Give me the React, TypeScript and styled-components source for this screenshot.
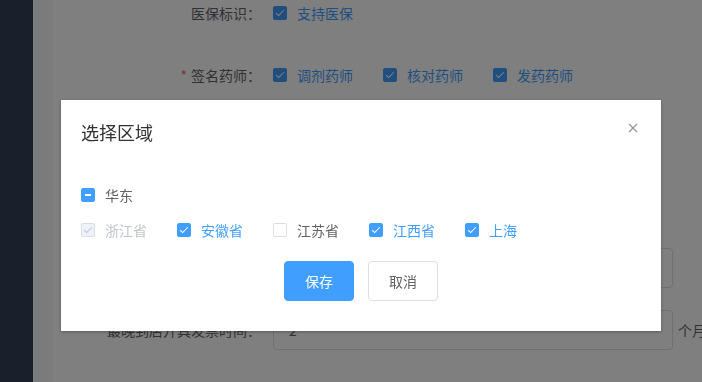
import React from 'react';
import styled, { createGlobalStyle, css } from 'styled-components';

const GlobalStyle = createGlobalStyle`
  html, body {
    margin: 0;
    padding: 0;
    width: 702px;
    height: 382px;
    overflow: hidden;
    font-family: "Noto Sans CJK SC", "Noto Sans", sans-serif;
    font-size: 14px;
  }
`;

type BoxState = 'checked' | 'unchecked' | 'indeterminate' | 'disabled';

const Layout = styled.div`
  display: flex;
  height: 382px;
  background: #ffffff;
`;

const Sidebar = styled.div`
  width: 33px;
  flex-shrink: 0;
  background: #304156;
`;

const Gutter = styled.div`
  width: 20px;
  flex-shrink: 0;
  background: #f6f6f6;
`;

const Main = styled.div`
  flex: 1;
  min-width: 0;
  padding-left: 20px;
`;

const FormList = styled.div`
  display: flex;
  flex-direction: column;
  margin-top: -7px;
`;

const FormItem = styled.div<{ $gap?: number }>`
  display: flex;
  align-items: center;
  height: 40px;
  margin-bottom: ${(p) => p.$gap ?? 22}px;
`;

const Label = styled.div`
  width: 200px;
  flex-shrink: 0;
  box-sizing: border-box;
  padding-right: 12px;
  text-align: right;
  color: #606266;
  font-size: 14px;
  white-space: nowrap;
`;

const Required = styled.span`
  color: #f56c6c;
  margin-right: 4px;
`;

const Content = styled.div`
  display: flex;
  align-items: center;
  flex-shrink: 0;
`;

const Input = styled.div`
  width: 400px;
  height: 40px;
  flex-shrink: 0;
  box-sizing: border-box;
  border: 1px solid #dcdfe6;
  border-radius: 4px;
  padding: 0 15px;
  display: flex;
  align-items: center;
  color: #606266;
`;

const Suffix = styled.span`
  margin-left: 5px;
  color: #606266;
  white-space: nowrap;
`;

const Overlay = styled.div`
  position: fixed;
  inset: 0;
  background: rgba(0, 0, 0, 0.5);
  display: flex;
  justify-content: center;
  align-items: flex-start;
  padding: 100px 0 0 20px;
`;

const Dialog = styled.div`
  width: 600px;
  background: #ffffff;
  box-shadow: 0 1px 3px rgba(0, 0, 0, 0.3);
`;

const Header = styled.div`
  display: flex;
  justify-content: space-between;
  align-items: center;
  padding: 20px 20px 10px;
`;

const Title = styled.span`
  font-size: 18px;
  line-height: 24px;
  color: #303133;
`;

const CloseBtn = styled.button`
  width: 16px;
  height: 16px;
  padding: 0;
  border: none;
  background: none;
  display: flex;
  align-items: center;
  justify-content: center;
  margin-top: -8px;
`;

const Body = styled.div`
  padding: 30px 20px 10px;
  display: flex;
  flex-direction: column;
  gap: 13px;
`;

const Row = styled.div`
  display: flex;
  align-items: center;
  height: 22px;
`;

const Item = styled.label`
  display: inline-flex;
  align-items: center;
  margin-right: 30px;
  cursor: pointer;
`;

const Box = styled.span<{ $state: BoxState }>`
  position: relative;
  width: 14px;
  height: 14px;
  box-sizing: border-box;
  border-radius: 2px;
  border: 1px solid #dcdfe6;
  background: #ffffff;
  flex-shrink: 0;

  ${(p) =>
    (p.$state === 'checked' || p.$state === 'indeterminate') &&
    css`
      background: #409eff;
      border-color: #409eff;
    `}

  ${(p) =>
    p.$state === 'disabled' &&
    css`
      background: #edf2fc;
      border-color: #dcdfe6;
    `}

  ${(p) =>
    (p.$state === 'checked' || p.$state === 'disabled') &&
    css`
      &::after {
        content: '';
        position: absolute;
        left: 4px;
        top: 1px;
        width: 3px;
        height: 7px;
        border: 1px solid ${p.$state === 'disabled' ? '#c0c4cc' : '#ffffff'};
        border-left: 0;
        border-top: 0;
        transform: rotate(45deg);
      }
    `}

  ${(p) =>
    p.$state === 'indeterminate' &&
    css`
      &::after {
        content: '';
        position: absolute;
        left: 3px;
        top: 5px;
        width: 6px;
        height: 2px;
        background: #ffffff;
      }
    `}
`;

const ItemText = styled.span<{ $state: BoxState }>`
  margin-left: 10px;
  font-size: 14px;
  color: ${(p) =>
    p.$state === 'checked' ? '#409eff' : p.$state === 'disabled' ? '#c0c4cc' : '#606266'};
`;

const Footer = styled.div`
  display: flex;
  justify-content: center;
  gap: 14px;
  padding: 10px 20px 30px;
`;

const Button = styled.button<{ $primary?: boolean }>`
  width: 70px;
  height: 40px;
  border-radius: 4px;
  font-family: inherit;
  font-size: 14px;
  cursor: pointer;
  border: 1px solid ${(p) => (p.$primary ? '#409eff' : '#dcdfe6')};
  background: ${(p) => (p.$primary ? '#409eff' : '#ffffff')};
  color: ${(p) => (p.$primary ? '#ffffff' : '#606266')};
`;

const Check: React.FC<{ state: BoxState; text: string }> = ({ state, text }) => (
  <Item>
    <Box $state={state} />
    <ItemText $state={state}>{text}</ItemText>
  </Item>
);

const provinces: { name: string; state: BoxState }[] = [
  { name: '浙江省', state: 'disabled' },
  { name: '安徽省', state: 'checked' },
  { name: '江苏省', state: 'unchecked' },
  { name: '江西省', state: 'checked' },
  { name: '上海', state: 'checked' },
];

const pharmacists = ['调剂药师', '核对药师', '发药药师'];

const App: React.FC = () => {
  return (
    <>
      <GlobalStyle />
      <Layout>
        <Sidebar />
        <Gutter />
        <Main>
          <FormList>
            <FormItem>
              <Label>医保标识：</Label>
              <Content>
                <Check state="checked" text="支持医保" />
              </Content>
            </FormItem>
            <FormItem $gap={153}>
              <Label>
                <Required>*</Required>签名药师：
              </Label>
              <Content>
                {pharmacists.map((n) => (
                  <Check key={n} state="checked" text={n} />
                ))}
              </Content>
            </FormItem>
            <FormItem>
              <Label>配送范围：</Label>
              <Content>
                <Input />
              </Content>
            </FormItem>
            <FormItem>
              <Label>最晚到店开具发票时间：</Label>
              <Content>
                <Input>2</Input>
                <Suffix>个月</Suffix>
              </Content>
            </FormItem>
          </FormList>
        </Main>
      </Layout>

      <Overlay>
        <Dialog>
          <Header>
            <Title>选择区域</Title>
            <CloseBtn aria-label="关闭">
              <svg width="10" height="10" viewBox="0 0 10 10">
                <path d="M1 1L9 9M9 1L1 9" stroke="#909399" strokeWidth="1.2" />
              </svg>
            </CloseBtn>
          </Header>
          <Body>
            <Row>
              <Check state="indeterminate" text="华东" />
            </Row>
            <Row>
              {provinces.map((p) => (
                <Check key={p.name} state={p.state} text={p.name} />
              ))}
            </Row>
          </Body>
          <Footer>
            <Button $primary>保存</Button>
            <Button>取消</Button>
          </Footer>
        </Dialog>
      </Overlay>
    </>
  );
};

export default App;
